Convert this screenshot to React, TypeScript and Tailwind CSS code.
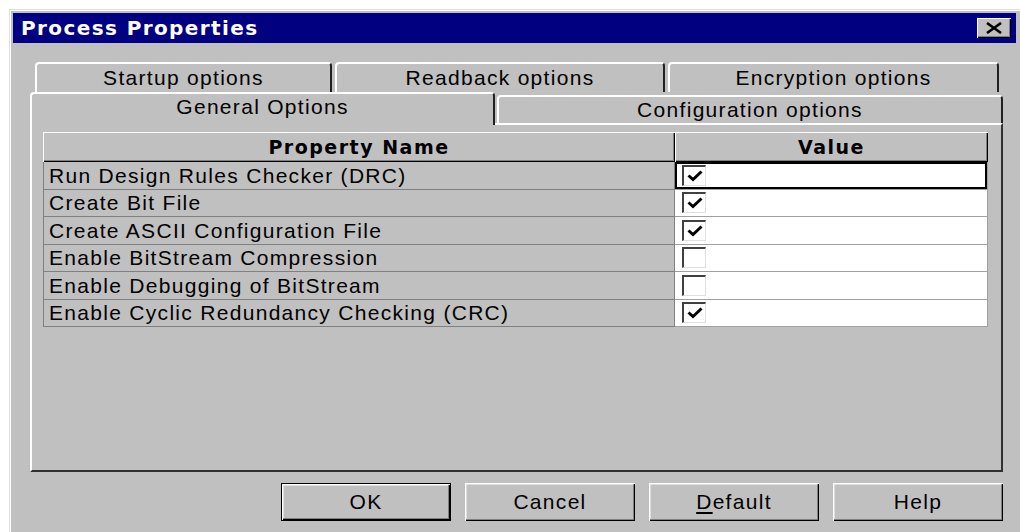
import React from 'react'

type Option = { name: string; on: boolean }

const options: Option[] = [
  { name: 'Run Design Rules Checker (DRC)', on: true },
  { name: 'Create Bit File', on: true },
  { name: 'Create ASCII Configuration File', on: true },
  { name: 'Enable BitStream Compression', on: false },
  { name: 'Enable Debugging of BitStream', on: false },
  { name: 'Enable Cyclic Redundancy Checking (CRC)', on: true },
]

// classic 3D bevels
const raised = 'shadow-[inset_1px_1px_0_#fff,inset_-1px_-1px_0_#000,inset_-2px_-2px_0_#808080]'
const button =
  'shadow-[inset_1px_1px_0_#fff,inset_-1px_-1px_0_#000,inset_-2px_-2px_0_#808080,inset_2px_2px_0_#dfdfdf]'

function CheckBox({ on }: { on: boolean }) {
  return (
    <div className="w-[24px] h-[21px] bg-white border-l-2 border-t-2 border-l-[#404040] border-t-[#404040] border-r border-b border-r-[#dfdfdf] border-b-[#dfdfdf] flex items-center justify-center">
      {on && (
        <svg width="16" height="12" viewBox="0 0 16 12">
          <path d="M1.5 5.5 L6 9.5 L14.5 1.5" stroke="#000" strokeWidth="3" fill="none" />
        </svg>
      )}
    </div>
  )
}

function BackTab({ label, width }: { label: string; width: string }) {
  return (
    <div
      className={`${width} h-[30px] rounded-t-[4px] border-t-2 border-l-2 border-r-2 border-t-white border-l-white border-r-[#202020] flex items-center justify-center`}
    >
      {label}
    </div>
  )
}

function DlgButton({ children, isDefault }: { children: React.ReactNode; isDefault?: boolean }) {
  return (
    <button
      className={`w-[170px] h-[38px] bg-[#c0c0c0] flex items-center justify-center ${button} ${
        isDefault ? 'border border-black' : ''
      }`}
    >
      {children}
    </button>
  )
}

export default function App() {
  return (
    <div className="w-[1020px] h-[532px] bg-white overflow-hidden font-['Liberation_Sans',Arial,sans-serif] text-[21px] tracking-[1.3px] text-black">
      <div className="ml-[9px] mt-[9px] w-[1011px] h-[523px] border-l border-t border-[#dfdfdf] bg-[#c0c0c0]">
        <div className="h-full border-l border-t border-white pl-[2px] pt-[2px] pr-[4px]">
          {/* Title bar */}
          <div className="h-[30px] bg-[#000080] flex items-center justify-between pl-[8px]">
            <span className="font-['DejaVu_Sans',sans-serif] font-bold text-[20px] tracking-[1.4px] text-white leading-none">
              Process Properties
            </span>
            <div className={`mr-[5px] w-[34px] h-[20px] bg-[#c0c0c0] flex items-center justify-center ${raised}`}>
              <svg width="18" height="12" viewBox="0 0 18 12">
                <path d="M2 1 L16 11 M16 1 L2 11" stroke="#000" strokeWidth="2.6" />
              </svg>
            </div>
          </div>

          <div className="pl-[17px] pr-[13px] pt-[19px]">
            {/* Tabs */}
            <div className="flex gap-[3px] pl-[5px]">
              <BackTab label="Startup options" width="w-[297px]" />
              <BackTab label="Readback options" width="w-[330px]" />
              <BackTab label="Encryption options" width="w-[331px]" />
            </div>
            <div className="flex items-end gap-[2px] -mb-[2px] relative z-10">
              <div className="w-[465px] h-[33px] bg-[#c0c0c0] rounded-t-[4px] border-t-2 border-l-2 border-r-2 border-t-white border-l-white border-r-[#202020] flex items-center justify-center pb-[6px]">
                General Options
              </div>
              <div className="w-[506px] h-[28px] mb-[2px] rounded-t-[4px] border-t-2 border-l-2 border-r-2 border-t-white border-l-white border-r-[#202020] flex items-center justify-center">
                Configuration options
              </div>
            </div>

            {/* Page */}
            <div className="h-[349px] border-2 border-t-white border-l-white border-r-[#303030] border-b-[#303030] pl-[11px] pt-[7px]">
              <div className="w-[945px]">
                <div className="flex h-[30px] font-['DejaVu_Sans',sans-serif] font-bold text-[19px] tracking-[1.5px]">
                  <div className={`w-[632px] flex items-center justify-center ${raised}`}>Property Name</div>
                  <div className={`w-[313px] flex items-center justify-center ${raised}`}>Value</div>
                </div>
                {options.map((o, i) => (
                  <div key={o.name} className="flex h-[27.5px]">
                    <div className="w-[632px] border-l border-b border-r border-[#808080] pl-[5px] flex items-center leading-none">
                      {o.name}
                    </div>
                    <div
                      className={`w-[313px] bg-white border-b border-r border-[#a0a0a0] pl-[7px] flex items-center ${
                        i === 0 ? 'shadow-[inset_0_0_0_2px_#000]' : ''
                      }`}
                    >
                      <CheckBox on={o.on} />
                    </div>
                  </div>
                ))}
              </div>
            </div>

            {/* Buttons */}
            <div className="flex justify-end gap-[14px] mt-[11px]">
              <DlgButton isDefault>OK</DlgButton>
              <DlgButton>Cancel</DlgButton>
              <DlgButton>
                <span>
                  <span className="underline underline-offset-[3px]">D</span>efault
                </span>
              </DlgButton>
              <DlgButton>Help</DlgButton>
            </div>
          </div>
        </div>
      </div>
    </div>
  )
}
